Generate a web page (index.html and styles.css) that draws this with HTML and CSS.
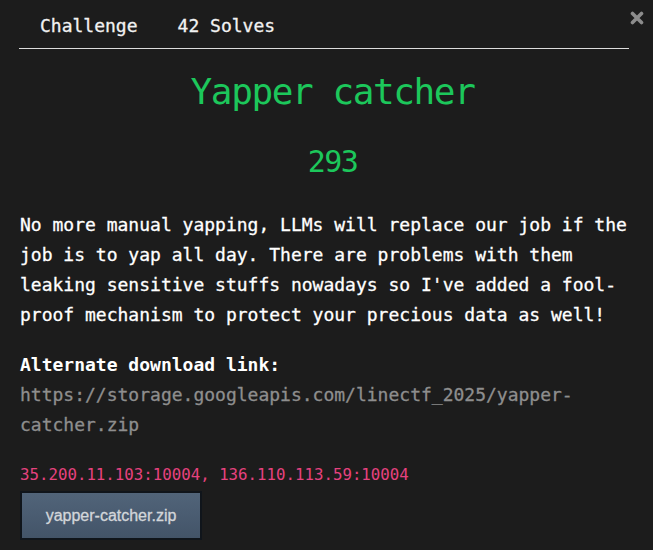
FILE: index.html
```html
<!DOCTYPE html>
<html lang="en">
<head>
<meta charset="utf-8">
<title>Yapper catcher</title>
<link rel="stylesheet" href="styles.css">
</head>
<body>
<div class="modal">
  <button class="close" aria-label="Close">
    <svg viewBox="0 0 14 14" width="14" height="14"><path d="M2.5 2.5 L11.5 11.5 M11.5 2.5 L2.5 11.5" stroke="#8c8c8c" stroke-width="3.6" stroke-linecap="round"/></svg>
  </button>
  <nav class="tabs">
    <span class="tab">Challenge</span>
    <span class="tab">42 Solves</span>
  </nav>
  <h2 class="title">Yapper catcher</h2>
  <h3 class="points">293</h3>
  <p class="desc">No more manual yapping, LLMs will replace our job if the job is to yap all day. There are problems with them leaking sensitive stuffs nowadays so I've added a fool-proof mechanism to protect your precious data as well!</p>
  <p class="desc alt"><strong>Alternate download link:</strong><br><a class="url" href="#">https://storage.googleapis.com/linectf_2025/yapper-catcher.zip</a></p>
  <code class="conn">35.200.11.103:10004, 136.110.113.59:10004</code>
  <div class="files">
    <a class="btn" href="#">yapper-catcher.zip</a>
  </div>
</div>
</body>
</html>
```
FILE: styles.css
```css
html, body {
  margin: 0;
  padding: 0;
  background: #1c1c1c;
  height: 100%;
}
body {
  font-family: "DejaVu Sans Mono", "Liberation Mono", monospace;
  color: #ffffff;
}
.modal {
  position: relative;
  width: 610px;
  padding: 0 24px 0 19px;
}
.close {
  position: absolute;
  top: 11px;
  right: 9px;
  background: none;
  border: 0;
  padding: 0;
  width: 14px;
  height: 14px;
  cursor: pointer;
}
.close svg { display: block; }
.tabs {
  display: flex;
  padding: 14px 0 10px 1px;
  border-bottom: 1px solid #dcdcdc;
}
.tab {
  padding: 0 20px;
  font-size: 18px;
  line-height: 24px;
  color: #f2f2f2;
  -webkit-text-stroke: 0.3px #f2f2f2;
}
.title {
  margin: 21px 0 0;
  padding-left: 17px;
  text-align: center;
  font-weight: normal;
  font-size: 36px;
  letter-spacing: -1.4px;
  line-height: 44px;
  color: #1cc75b;
}
.points {
  margin: 30px 0 0;
  padding-left: 17px;
  text-align: center;
  font-weight: normal;
  font-size: 30px;
  letter-spacing: -1.6px;
  line-height: 36px;
  color: #1cc75b;
}
.desc {
  margin: 30px 0 0 1px;
  font-size: 18px;
  line-height: 30px;
  color: #ffffff;
  -webkit-text-stroke: 0.3px #ffffff;
}
.alt {
  margin-top: 20px;
}
.alt strong { font-weight: bold; -webkit-text-stroke: 0; }
.url {
  color: #8e8e8e;
  text-decoration: none;
  -webkit-text-stroke: 0.3px #8e8e8e;
}
.conn {
  display: block;
  margin: 25px 0 0 1px;
  font-family: "DejaVu Sans Mono", monospace;
  font-size: 15.75px;
  line-height: 20px;
  color: #e6427f;
}
.files {
  display: flex;
  margin-top: 6px;
  margin-left: 1px;
}
.btn {
  display: block;
  width: 178px;
  height: 45px;
  line-height: 45px;
  text-align: center;
  border: 2px solid #10151b;
  background: linear-gradient(#516479, #4a5c71 50%, #435468);
  color: #d3d6da;
  font-family: "Liberation Sans", Arial, sans-serif;
  font-size: 16px;
  -webkit-text-stroke: 0.3px #d3d6da;
  text-decoration: none;
}
```
